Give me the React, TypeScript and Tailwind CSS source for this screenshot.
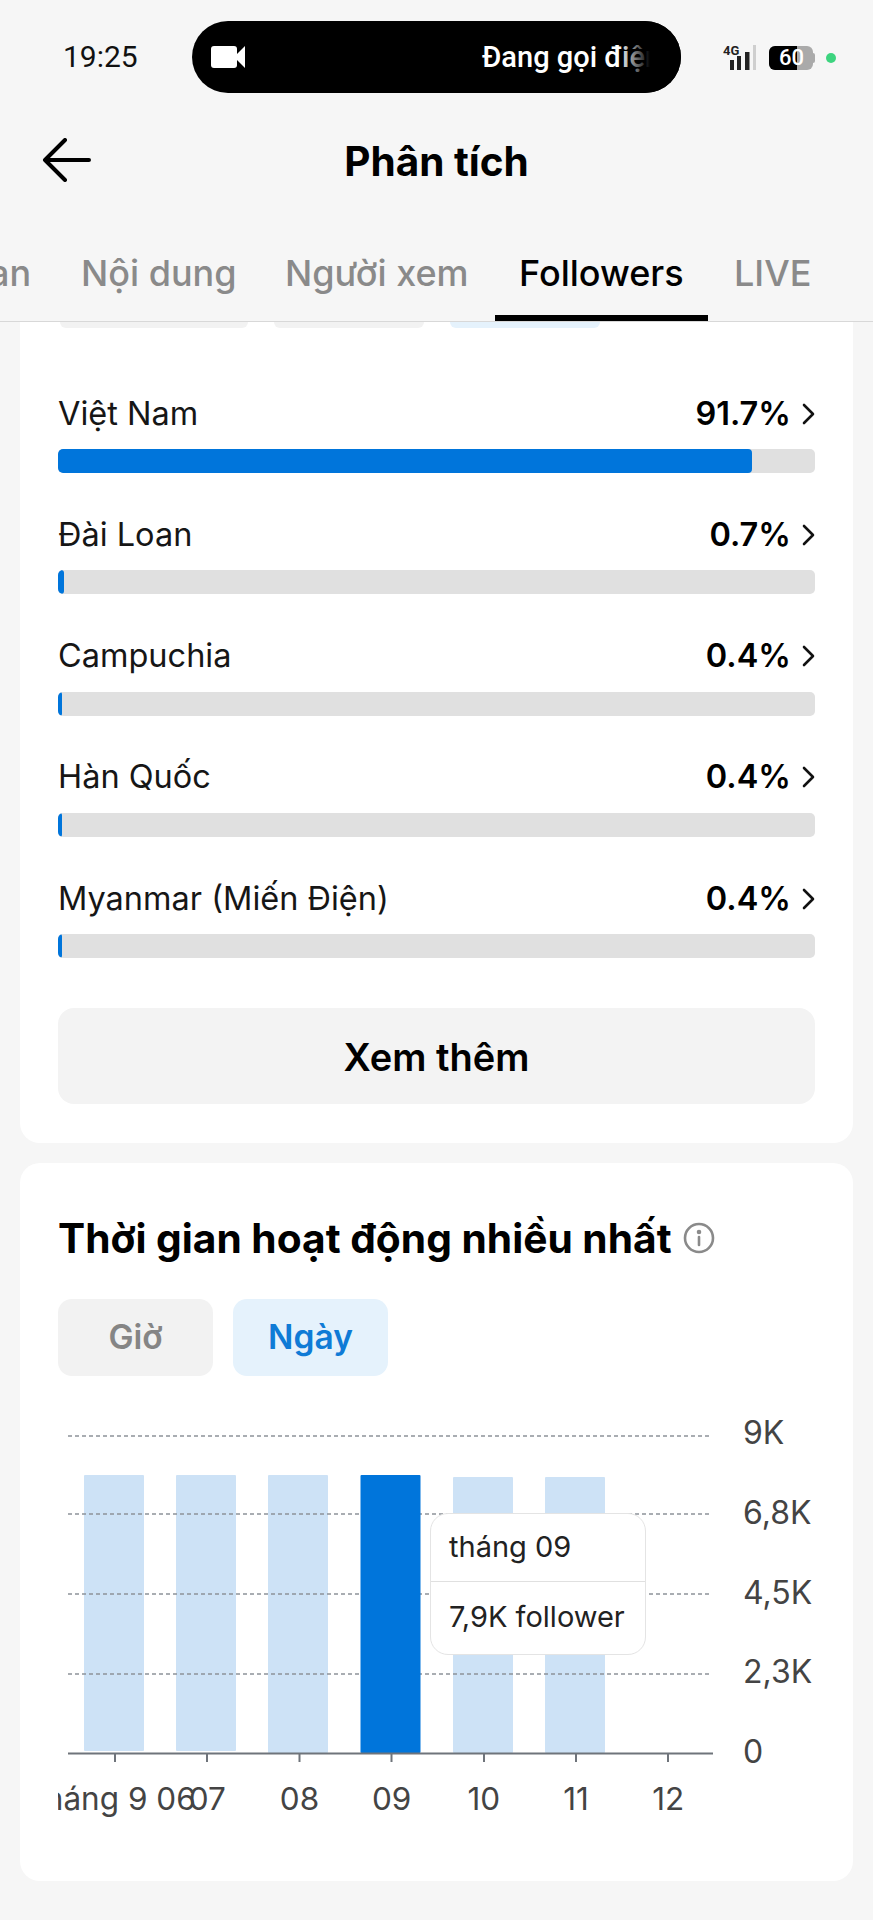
const countries = [
  { name: "Việt Nam", pct: "91.7%", fill: "w-[694px]" },
  { name: "Đài Loan", pct: "0.7%", fill: "w-[6px]" },
  { name: "Campuchia", pct: "0.4%", fill: "w-[4px]" },
  { name: "Hàn Quốc", pct: "0.4%", fill: "w-[4px]" },
  { name: "Myanmar (Miến Điện)", pct: "0.4%", fill: "w-[4px]" },
];

const bars = [
  { x: 84, top: 1475, bottom: 1751 },
  { x: 176, top: 1475, bottom: 1751 },
  { x: 268, top: 1475, bottom: 1753 },
  { x: 453, top: 1477, bottom: 1753 },
  { x: 545, top: 1477, bottom: 1753 },
];

const gridLines = [1436, 1514, 1594, 1674];
const ticks = [115, 207, 299.5, 391.5, 484, 576, 668];
const xLabels = ["tháng 9 06", "07", "08", "09", "10", "11", "12"];
const yLabels = ["9K", "6,8K", "4,5K", "2,3K", "0"];

function StatusBar() {
  return (
    <div className="flex h-[115px] w-full items-start pt-[21px]">
      <span className="ml-[63px] mt-[17px] w-[129px] font-['Roboto',sans-serif] text-[30px] leading-[38px] text-[#111]">19:25</span>
      <div className="relative flex h-[72px] w-[489px] items-center overflow-hidden rounded-[36px] bg-black pl-[19px]">
        <svg width="35" height="24" viewBox="0 0 35 24" fill="white">
          <rect x="0" y="1" width="26" height="22" rx="3" />
          <path d="M25 10 L34 1 V23 L25 14 Z" />
        </svg>
        <span className="ml-[236px] whitespace-nowrap font-['Roboto',sans-serif] text-[29px] font-medium leading-[36px] text-white">Đang gọi điện</span>
        <div className="absolute bottom-0 left-[420px] top-0 w-[69px] bg-[linear-gradient(to_right,transparent_0%,transparent_10%,black_55%)]" />
      </div>
      <div className="ml-[42px] mt-[23px]">
        <svg width="44" height="28" viewBox="0 0 44 28" className="block">
          <text x="0" y="11" fontFamily="Roboto, sans-serif" fontSize="13" fontWeight="700" fill="#222">4G</text>
          <rect x="7" y="16" width="4" height="10" fill="#222" />
          <rect x="14" y="12" width="4" height="14" fill="#222" />
          <rect x="22" y="8" width="4.5" height="18" fill="#222" />
          <rect x="30" y="1" width="3" height="25" fill="#cfcfcf" />
        </svg>
      </div>
      <div className="ml-[2px] mt-[25px] flex h-[24px] w-[46px] items-center">
        <div className="relative flex h-[24px] w-[44px] overflow-hidden rounded-[6px] bg-[#aaa]">
          <div className="h-full w-[28px] bg-black" />
          <span className="absolute left-[10px] top-0 font-['Roboto',sans-serif] text-[22px] font-medium leading-[24px] text-white">60</span>
        </div>
        <div className="h-[10px] w-[2px] rounded-r bg-[#aaa]" />
      </div>
      <div className="ml-[11px] mt-[32px] h-[10px] w-[10px] rounded-full bg-[#3dd47f]" />
    </div>
  );
}

function Header() {
  return (
    <div className="relative flex h-[94px] items-start justify-center">
      <svg width="52" height="44" viewBox="0 0 52 44" fill="none" stroke="#000" strokeWidth="4" strokeLinecap="round" strokeLinejoin="round" className="absolute left-[42px] top-[23px]">
        <path d="M47 22 H4 M23 2 L3 22 L23 42" />
      </svg>
      <h1 className="mt-[24px] text-[40.5px] font-bold leading-[46px] text-black">Phân tích</h1>
    </div>
  );
}

function Tabs() {
  return (
    <div className="relative h-[113px] border-b border-[#d8d8d8]">
      <div className="absolute left-0 top-[41px] flex h-[46px] w-full overflow-hidden whitespace-nowrap text-[36px] font-medium leading-[46px] text-[#8a8a8a]">
        <span className="ml-[-11px] w-[92px] shrink-0 text-left">an</span>
        <span className="w-[204px] shrink-0">Nội dung</span>
        <span className="w-[234px] shrink-0">Người xem</span>
        <span className="w-[215px] shrink-0 text-black">Followers</span>
        <span>LIVE</span>
      </div>
      <div className="absolute bottom-0 left-[495px] h-[6px] w-[213px] bg-black" />
    </div>
  );
}

function Chevron() {
  return (
    <svg width="13" height="22" viewBox="0 0 13 22" fill="none" stroke="#111" strokeWidth="2.6" strokeLinecap="round" strokeLinejoin="round">
      <path d="M2 2 L11 11 L2 20" />
    </svg>
  );
}

function CountryCard() {
  return (
    <div className="mx-[20px] rounded-b-[20px] bg-white px-[38px] pb-[39px]">
      <div className="flex h-[6px] gap-[26px] pl-[2px]">
        <div className="w-[188px] rounded-b-xl bg-[#f2f2f2]" />
        <div className="w-[150px] rounded-b-xl bg-[#f2f2f2]" />
        <div className="w-[150px] rounded-b-xl bg-[#e5f2fc]" />
      </div>
      <div className="mt-[65.5px] flex flex-col gap-[41.75px]">
        {countries.map((c) => (
          <div key={c.name} className="flex flex-col gap-[15.5px]">
            <div className="flex h-[40px] items-center justify-between">
              <span className="text-[32.5px] leading-[40px] text-[#161616]">{c.name}</span>
              <div className="flex items-center gap-[11px]">
                <span className="text-[32.5px] font-semibold leading-[40px] text-black">{c.pct}</span>
                <Chevron />
              </div>
            </div>
            <div className="h-[24px] overflow-hidden rounded-[5px] bg-[#e0e0e0]">
              <div className={`h-full rounded-[4px] bg-[#0075db] ${c.fill}`} />
            </div>
          </div>
        ))}
      </div>
      <button className="mt-[50px] flex h-[96px] w-full items-center justify-center rounded-[16px] bg-[#f3f3f3] pt-[2px] text-[38px] font-semibold text-black">
        Xem thêm
      </button>
    </div>
  );
}

function ActivityChart() {
  return (
    <div className="relative mt-[37px]">
      <div className="flex">
        <svg width="660" height="360" viewBox="58 1413 660 360" className="block shrink-0">
          {bars.map((b) => (
            <rect key={b.x} x={b.x} y={b.top} width="60" height={b.bottom - b.top} rx="1" fill="#cde2f6" />
          ))}
          {gridLines.map((y) => (
            <line key={y} x1="68" x2="711" y1={y} y2={y} stroke="#8d9299" strokeWidth="1.5" strokeDasharray="4 3" />
          ))}
          <rect x="360.5" y="1475" width="60" height="278" rx="1" fill="#0075db" />
          <line x1="68" x2="713" y1="1753.5" y2="1753.5" stroke="#6f747b" strokeWidth="2" />
          {ticks.map((x) => (
            <line key={x} x1={x} x2={x} y1="1753" y2="1762" stroke="#6f747b" strokeWidth="2" />
          ))}
        </svg>
        <div className="ml-[25px] flex h-[359px] flex-col justify-between text-[32px] leading-[40px] text-[#444]">
          {yLabels.map((l) => (
            <span key={l}>{l}</span>
          ))}
        </div>
      </div>
      <div className="mt-[6px] flex h-[40px] w-[660px] overflow-hidden pl-[11px] text-[31.5px] leading-[40px] text-[#444]">
        {xLabels.map((l) => (
          <div key={l} className="flex w-[92.2px] shrink-0 justify-center whitespace-nowrap">
            {l}
          </div>
        ))}
      </div>
      <div className="absolute left-[372px] top-[100px] w-[216px] rounded-[18px] border border-[#e4e4e4] bg-white text-[#222]">
        <div className="flex h-[68px] items-center border-b border-[#e0e0e0] pb-[1px] pl-[18px] text-[29px]">tháng 09</div>
        <div className="flex h-[72px] items-start pl-[18px] pt-[15px] text-[29px] leading-[40px]">7,9K follower</div>
      </div>
    </div>
  );
}

function ActivityCard() {
  return (
    <div className="mx-[20px] mt-[20px] rounded-[20px] bg-white px-[38px] pb-[62px] pt-[53px]">
      <div className="flex h-[44px] items-center gap-[11px]">
        <h2 className="mt-[1px] whitespace-nowrap text-[40.7px] font-bold leading-[44px] text-black">Thời gian hoạt động nhiều nhất</h2>
        <svg width="32" height="32" viewBox="0 0 32 32" fill="none" stroke="#8a8a8a" strokeWidth="2.6" strokeLinecap="round">
          <circle cx="16" cy="16" r="14" />
          <path d="M16 15 V23" />
          <circle cx="16" cy="10" r="1" fill="#8a8a8a" />
        </svg>
      </div>
      <div className="mt-[39px] flex gap-[20px]">
        <div className="flex h-[77px] w-[155px] items-center justify-center rounded-[14px] bg-[#f2f2f2] text-[33.5px] font-semibold text-[#858585]">Giờ</div>
        <div className="flex h-[77px] w-[155px] items-center justify-center rounded-[14px] bg-[#e5f2fc] text-[33.5px] font-semibold text-[#0f7bd6]">Ngày</div>
      </div>
      <ActivityChart />
    </div>
  );
}

export default function App() {
  return (
    <div className="h-[1920px] w-[873px] overflow-hidden bg-[#f6f6f6] font-['Inter',sans-serif]">
      <StatusBar />
      <Header />
      <Tabs />
      <CountryCard />
      <ActivityCard />
    </div>
  );
}
